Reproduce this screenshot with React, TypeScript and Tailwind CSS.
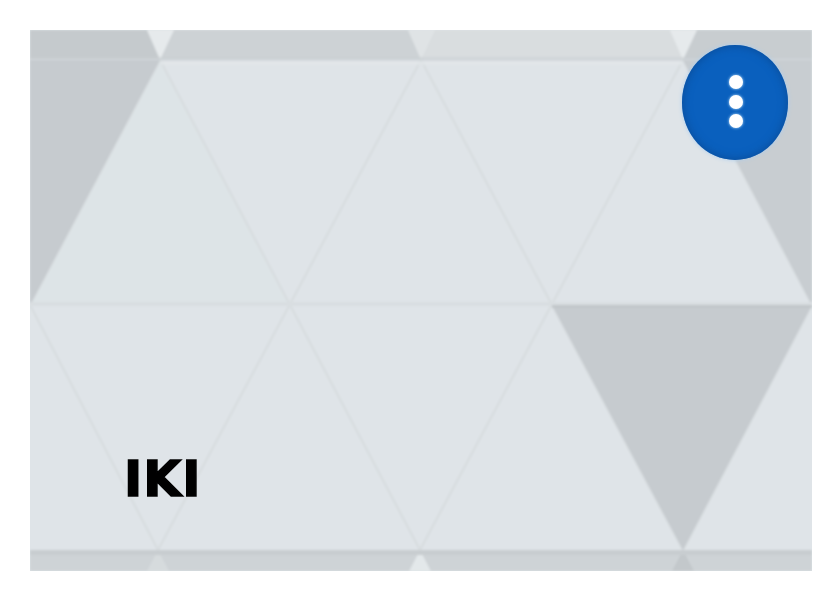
export default function App() {
  const lines = [
    "160,60 420,550", "421,60 158,550", "421,60 683,550", "683,60 420,550",
    "160,60 30,305", "30,305 158,550", "812,305 683,550", "683,60 812,305",
    "160,60 146,30", "160,60 175,30", "421,60 407,30", "421,60 436,30",
    "683,60 669,30", "683,60 698,30", "158,550 147,571", "158,550 169,571",
    "420,550 409,571", "420,550 431,571", "683,550 672,571", "683,550 694,571",
  ];
  return (
    <div className="min-h-[600px] w-[840px] bg-white p-[30px]">
      <div className="relative h-[541px] w-[782px] overflow-hidden bg-[#dfe4e8]">
        <svg className="block h-full w-full blur-[1px]" viewBox="30 30 782 541" aria-hidden="true">
          <rect x="20" y="20" width="802" height="561" fill="#dfe4e8" />
          <polygon points="160,60 290,305 30,305" fill="#dde4e7" />
          {lines.map((p) => (
            <polyline key={p} points={p} fill="none" stroke="#d8dde0" strokeWidth="2.4" />
          ))}
          <polygon points="20,60 160,60 30,305 20,305" fill="#c6cbcf" />
          <polygon points="683,60 822,60 822,305 812,305" fill="#c8cdd1" />
          <polygon points="552,305 812,305 683,550" fill="#c6cbcf" />
          <rect x="20" y="20" width="140" height="39" fill="#c5cacd" />
          <rect x="160" y="20" width="261" height="39" fill="#cdd2d5" />
          <rect x="421" y="20" width="262" height="39" fill="#d9dddf" />
          <rect x="683" y="20" width="139" height="39" fill="#c8cdd0" />
          <rect x="20" y="551" width="802" height="30" fill="#ced3d6" />
          <polygon points="146,28 175,28 160,60" fill="#e6eaec" />
          <polygon points="407,28 436,28 421,60" fill="#dfe3e5" />
          <polygon points="669,28 698,28 683,60" fill="#e6eaec" />
          <polygon points="158,550 145,575 171,575" fill="#d6dbdd" />
          <polygon points="420,550 407,575 433,575" fill="#e3e8ea" />
          <polygon points="683,550 670,575 696,575" fill="#c3c8cb" />
          <rect x="20" y="57" width="802" height="4" fill="#c9ced1" opacity="0.55" />
          <rect x="160" y="61" width="523" height="4" fill="#e3e7ea" opacity="0.7" />
          <rect x="20" y="302" width="802" height="4" fill="#d9dee1" />
          <rect x="552" y="305" width="260" height="3" fill="#c2c7ca" />
          <rect x="20" y="550" width="802" height="5" fill="#c8cdd0" />
        </svg>
        <button
          type="button"
          aria-label="More"
          className="absolute left-[652px] top-[15px] flex h-[115px] w-[106px] flex-col items-center justify-center gap-[5.5px] rounded-[50%] bg-[#0a60be] pb-[2px] pl-px shadow-[inset_0_0_10px_#0b4a94,0_0_4px_#a9cdf0]"
        >
          <span className="h-[14px] w-[14px] rounded-full bg-white shadow-[0_0_3px_#bfe3ff]" />
          <span className="h-[14px] w-[14px] rounded-full bg-white shadow-[0_0_3px_#bfe3ff]" />
          <span className="h-[14px] w-[14px] rounded-full bg-white shadow-[0_0_3px_#bfe3ff]" />
        </button>
        <p className="absolute left-[94px] top-[421px] font-['DejaVu_Sans',sans-serif] text-[49px] font-bold leading-[58px] tracking-[1px] text-black [-webkit-text-stroke:1.5px_black]">
          IKI
        </p>
      </div>
    </div>
  );
}
